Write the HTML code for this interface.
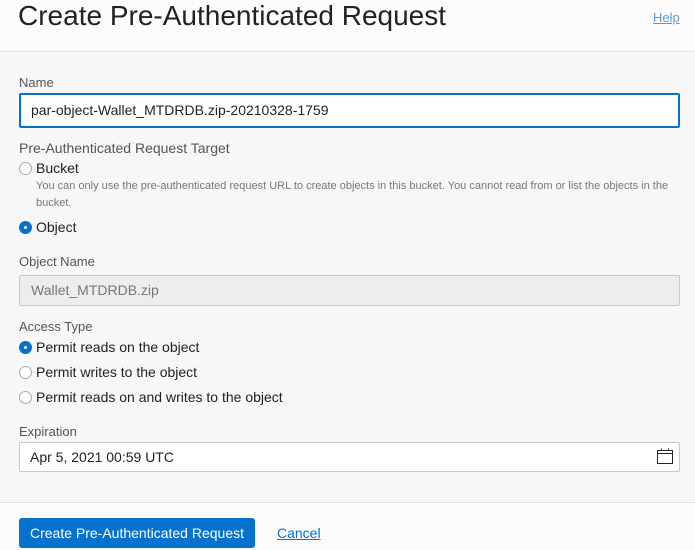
<!DOCTYPE html>
<html><head><style>
*{margin:0;padding:0;box-sizing:border-box}
body{width:695px;height:550px;overflow:hidden;background:#f7f7f7;font-family:"Liberation Sans",sans-serif;position:relative}
.a{position:absolute;white-space:nowrap}
.lbl{font-size:13px;color:#555}
.lbl2{font-size:14px;color:#555}
.r{position:absolute;width:13px;height:13px;border-radius:50%;border:1px solid #aaa;background:#fff}
.r.on{background:#0572ce;border-color:#0572ce}
.r.on:after{content:"";position:absolute;left:4px;top:4px;width:3px;height:3px;border-radius:50%;background:#fff}
.t{font-size:14px;color:#222}
.inp{position:absolute;left:19px;width:661px;background:#fff;border:1px solid #c8c8c8;border-radius:2px;font-size:14px;color:#222;padding-left:11px}
</style></head><body>
<div class="a" style="left:0;top:0;width:695px;height:52px;background:#fcfcfc;border-bottom:1px solid #e4e4e4"></div>
<div class="a" style="left:18px;top:0px;font-size:28px;color:#222">Create Pre-Authenticated Request</div>
<div class="a" style="left:653px;top:10px;font-size:13px;color:#5b9bd5;text-decoration:underline">Help</div>

<div class="a lbl" style="left:19px;top:75px">Name</div>
<div class="inp" style="top:93px;height:35px;border:2px solid #0572ce;line-height:31px;padding-left:10px">par-object-Wallet_MTDRDB.zip-20210328-1759</div>

<div class="a lbl2" style="left:19px;top:140px">Pre-Authenticated Request Target</div>
<div class="r" style="left:19px;top:162px"></div>
<div class="a t" style="left:36px;top:160px">Bucket</div>
<div class="a" style="left:36px;top:178px;font-size:11px;color:#777;line-height:17px;white-space:normal;width:650px">You can only use the pre-authenticated request URL to create objects in this bucket. You cannot read from or list the objects in the bucket.</div>
<div class="r on" style="left:19px;top:221px"></div>
<div class="a t" style="left:36px;top:219px">Object</div>

<div class="a lbl" style="left:19px;top:254px">Object Name</div>
<div class="inp" style="top:275px;height:31px;background:#ededed;color:#777;line-height:29px">Wallet_MTDRDB.zip</div>

<div class="a lbl" style="left:19px;top:319px">Access Type</div>
<div class="r on" style="left:19px;top:341px"></div>
<div class="a t" style="left:36px;top:339px">Permit reads on the object</div>
<div class="r" style="left:19px;top:366px"></div>
<div class="a t" style="left:36px;top:364px">Permit writes to the object</div>
<div class="r" style="left:19px;top:391px"></div>
<div class="a t" style="left:36px;top:389px">Permit reads on and writes to the object</div>

<div class="a lbl" style="left:19px;top:424px">Expiration</div>
<div class="inp" style="top:442px;height:30px;line-height:28px;padding-left:10px">Apr 5, 2021 00:59 UTC</div>
<svg class="a" style="left:656px;top:448px" width="18" height="17" viewBox="0 0 18 17"><rect x="1.5" y="2.5" width="15" height="13" fill="none" stroke="#222"/><line x1="1.5" y1="5.5" x2="16.5" y2="5.5" stroke="#222"/><line x1="5.5" y1="0.5" x2="5.5" y2="3" stroke="#222"/><line x1="12.5" y1="0.5" x2="12.5" y2="3" stroke="#222"/></svg>

<div class="a" style="left:0;top:502px;width:695px;height:48px;background:#fbfbfb;border-top:1px solid #e2e2e2"></div>
<div class="a" style="left:19px;top:518px;width:236px;height:30px;background:#0572ce;border-radius:3px;color:#fff;font-size:14px;line-height:30px;text-align:center">Create Pre-Authenticated Request</div>
<div class="a" style="left:277px;top:525px;font-size:14px;color:#0572ce;text-decoration:underline">Cancel</div>
</body></html>
